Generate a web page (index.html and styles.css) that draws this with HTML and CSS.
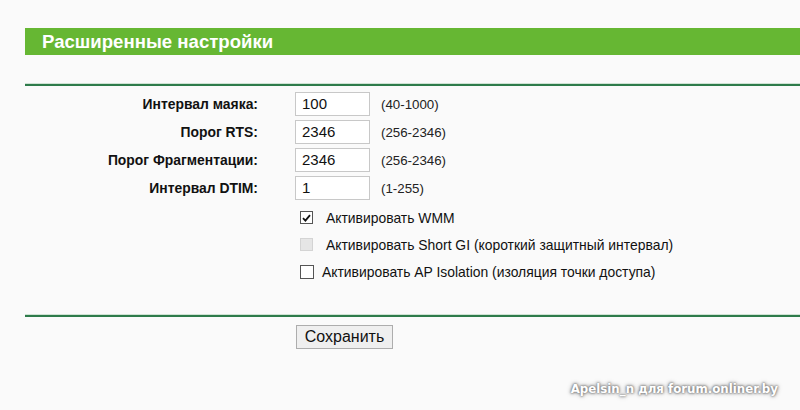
FILE: index.html
```html
<!DOCTYPE html>
<html lang="ru">
<head>
<meta charset="utf-8">
<link rel="stylesheet" href="styles.css">
</head>
<body>
<div class="page">
  <div class="titlebar">Расширенные настройки</div>
  <div class="rule rule-top"></div>
  <div class="form">
    <div class="label">Интервал маяка:</div>
    <div class="field"><input class="txt" type="text" value="100"><span class="range">(40-1000)</span></div>
    <div class="label">Порог RTS:</div>
    <div class="field"><input class="txt" type="text" value="2346"><span class="range">(256-2346)</span></div>
    <div class="label">Порог Фрагментации:</div>
    <div class="field"><input class="txt" type="text" value="2346"><span class="range">(256-2346)</span></div>
    <div class="label">Интервал DTIM:</div>
    <div class="field"><input class="txt" type="text" value="1"><span class="range">(1-255)</span></div>
  </div>
  <div class="checks">
    <div class="check"><span class="box checked"><svg width="9" height="8" viewBox="0 0 9 8"><path d="M1 4.2 L3.4 6.6 L8 1.2" fill="none" stroke="#111" stroke-width="1.8"/></svg></span><span class="ctext">Активировать WMM</span></div>
    <div class="check"><span class="box disabled"></span><span class="ctext">Активировать Short GI (короткий защитный интервал)</span></div>
    <div class="check"><span class="box big"></span><span class="ctext near">Активировать AP Isolation (изоляция точки доступа)</span></div>
  </div>
  <div class="rule rule-bottom"></div>
  <div class="actions">
    <button class="btn" type="button">Сохранить</button>
  </div>
  <div class="watermark">Apelsin_n для forum.onliner.by</div>
</div>
</body>
</html>
```

FILE: styles.css
```css
html, body {
  margin: 0;
  padding: 0;
  background: #fafafa;
}
body {
  font-family: "Liberation Sans", Arial, sans-serif;
  color: #111;
  width: 800px;
  height: 410px;
  overflow: hidden;
}
.page {
  padding: 28px 0 0 25px;
  position: relative;
  height: 382px;
}
.titlebar {
  height: 27px;
  background: #66b733;
  color: #fff;
  font-weight: bold;
  font-size: 18.6px;
  line-height: 28px;
  padding-left: 17px;
}
.rule {
  height: 2px;
  background: #2e7b4b;
  box-shadow: 0 -1px 0 #cfe3d4;
}
.rule-top {
  margin-top: 29px;
}
.form {
  display: grid;
  grid-template-columns: 233px auto;
  column-gap: 37px;
  row-gap: 4px;
  margin-top: 6px;
  align-items: center;
}
.label {
  text-align: right;
  font-weight: bold;
  font-size: 13.9px;
  color: #111;
}
.field {
  display: flex;
  align-items: center;
}
.txt {
  box-sizing: border-box;
  width: 75px;
  height: 24px;
  border: 1px solid #c8c8c8;
  background: #fff;
  font-family: "Liberation Sans", Arial, sans-serif;
  font-size: 15px;
  color: #111;
  padding: 0 0 2px 6px;
  margin: 0;
  outline: none;
}
.range {
  margin-left: 11px;
  font-size: 13.3px;
  color: #222;
}
.checks {
  display: flex;
  flex-direction: column;
  gap: 10px;
  margin-top: 9px;
  padding-left: 275px;
}
.check {
  display: flex;
  align-items: center;
  height: 17px;
}
.box {
  box-sizing: border-box;
  width: 13px;
  height: 13px;
  border: 1px solid #555;
  background: #fff;
  display: flex;
  align-items: center;
  justify-content: center;
}
.box.disabled {
  border-color: #d4d4d4;
  background: #e6e6e6;
}
.box.big {
  width: 14px;
  height: 14px;
}
.ctext {
  font-size: 13.9px;
  color: #111;
  margin-left: 13px;
}
.ctext.near {
  margin-left: 8px;
}
.rule-bottom {
  margin-top: 35px;
}
.actions {
  padding-left: 271px;
  margin-top: 8px;
}
.btn {
  box-sizing: border-box;
  width: 97px;
  height: 24px;
  font-family: "Liberation Sans", Arial, sans-serif;
  font-size: 16px;
  color: #111;
  background: #efefef;
  border: 1px solid #adadad;
  padding: 0 0 1px;
  margin: 0;
}
.watermark {
  position: absolute;
  right: 22px;
  bottom: 14px;
  font-family: "DejaVu Sans", Verdana, sans-serif;
  font-weight: bold;
  font-size: 11.8px;
  color: #fff;
  text-shadow: 0 0 3px #777, 0 0 5px #999, 0 0 2px #666;
}
```
